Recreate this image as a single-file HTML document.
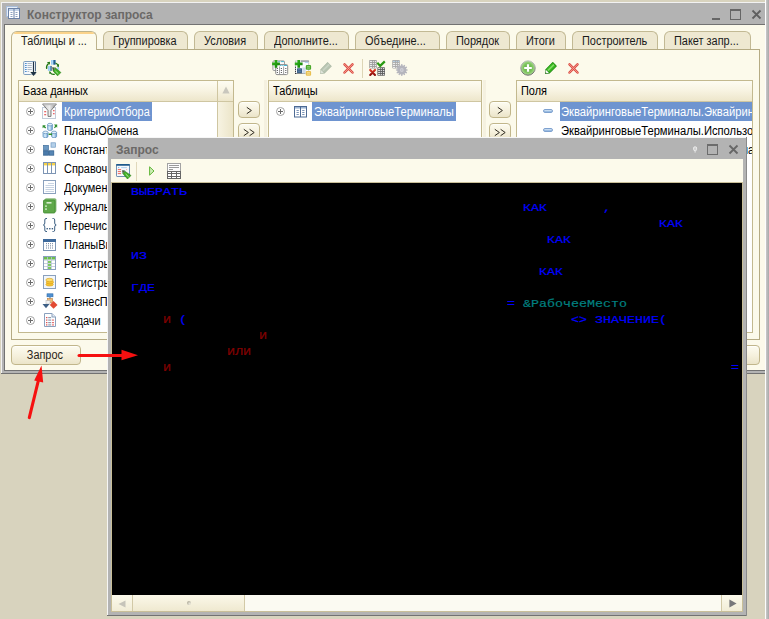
<!DOCTYPE html>
<html lang="ru">
<head>
<meta charset="utf-8">
<title>Конструктор запроса</title>
<style>
html,body{margin:0;padding:0;}
body{width:769px;height:619px;overflow:hidden;position:relative;background:#d8d3be;font-family:"Liberation Sans",sans-serif;font-size:11px;color:#000;}
.a{position:absolute;box-sizing:border-box;}
.t{position:absolute;white-space:nowrap;line-height:14px;font-size:12px;transform:scaleX(.91);transform-origin:0 0;}
.s{display:inline-block;font-size:12px;transform:scaleX(.91);transform-origin:0 50%;white-space:nowrap;}
/* main window */
#mw{left:1px;top:2px;width:767px;height:372px;background:#fff;}
#mwg{left:2px;top:3px;width:766px;height:370px;background:#b1b1b1;}
#mwd{left:4px;top:24px;width:762px;height:346px;background:#6e6e6e;}
#mwc{left:5px;top:25px;width:760px;height:345px;background:#fcfaeb;}
.ttl{font-weight:bold;font-size:12px;color:#6b6967;transform:none;}
/* tabs */
.tab{position:absolute;box-sizing:border-box;top:31px;height:18px;border:1px solid #c2b994;border-bottom:none;border-radius:6px 6px 0 0;background:#eee8d1;text-align:left;padding-left:8.5px;line-height:18px;white-space:nowrap;color:#1a1a1a;}
.tab.act{top:31px;height:19px;background:#fcfaeb;border-color:#bdb38c;line-height:18px;z-index:3;}
.tab.act:before{content:"";position:absolute;left:2px;right:2px;top:0;height:2px;background:#fbd38a;border-radius:4px 4px 0 0;}
#tp{left:11px;top:49px;width:749px;height:291px;border:1px solid #b5ab84;background:#fcfaeb;}
/* lists */
.lst{position:absolute;box-sizing:border-box;border:1px solid #c3b98f;background:#fff;overflow:hidden;}
.hdr{position:absolute;left:0;top:0;right:0;height:21px;box-sizing:border-box;border-bottom:1px solid #cfc6a1;background:linear-gradient(#fdfcf2,#f8f4e3 45%,#ede6cb);}
.row{position:absolute;left:0;right:0;height:19px;}
.sel{position:absolute;top:0;height:19px;background:#6e94d0;}
.pl{position:absolute;width:9px;height:9px;border:1px solid #a3a3a3;border-radius:50%;box-sizing:border-box;background:#fff;}
.pl:before{content:"";position:absolute;left:1px;top:3px;width:5px;height:1px;background:#6a6a6a;}
.pl:after{content:"";position:absolute;left:3px;top:1px;width:1px;height:5px;background:#6a6a6a;}
.btn{position:absolute;box-sizing:border-box;border:1px solid #c1b68b;border-radius:4px;background:linear-gradient(#fdfcf1,#f5f0dc 55%,#ebe4c9);box-shadow:inset 0 1px 0 #fffffa;text-align:center;}
/* query window */
#qw{background:#b3b3b3;}
#qtb{left:111px;top:159px;width:632px;height:23px;background:#fcfaeb;}
#qed{left:112px;top:183px;width:630px;height:412px;background:#000;}
.c{position:absolute;white-space:pre;font-family:"Liberation Mono",monospace;font-size:13.333px;line-height:16px;color:#0000ff;transform-origin:0 11.5px;transform:scaleY(.87);-webkit-text-stroke-width:.22px;}
.r{color:#800000;}
.g{color:#008080;}
.ic{width:16px;height:16px;display:block}
</style>
</head>
<body>
<!-- right strip -->
<div class="a" style="left:765px;top:0;width:1px;height:619px;background:#fdfdfd"></div>
<div class="a" style="left:766px;top:0;width:3px;height:619px;background:linear-gradient(90deg,#c9c9c9,#a9a9a9)"></div>

<!-- main window -->
<div class="a" style="left:1px;top:2px;width:764px;height:372px;background:#f2f2f2"></div>
<div class="a" style="left:1px;top:373px;width:764px;height:1px;background:#727272"></div>
<div class="a" style="left:2px;top:3px;width:763px;height:370px;background:#b3b3b3"></div>
<div class="a" style="left:4px;top:24px;width:761px;height:347px;background:#727272"></div>
<div class="a" style="left:5px;top:25px;width:760px;height:345px;background:#fcfaeb"></div>
<div class="t ttl" style="left:27px;top:8px;">Конструктор запроса</div>
<!-- title icon -->
<svg class="a" style="left:6px;top:5px" width="16" height="16" viewBox="0 0 16 16">
<rect x="0.5" y="1.5" width="11" height="10" fill="#e6eef8" stroke="#a9bdd8"/>
<rect x="2.5" y="3.5" width="11" height="10" fill="#fff" stroke="#6c82a6"/>
<rect x="3" y="4" width="10" height="2" fill="#c4d4e8"/>
<line x1="8" y1="4" x2="8" y2="13" stroke="#6a80a3"/>
<g stroke="#8ea2c0"><line x1="4.5" y1="7.5" x2="6.5" y2="7.5"/><line x1="4.5" y1="9.5" x2="6.5" y2="9.5"/><line x1="4.5" y1="11.5" x2="6.5" y2="11.5"/><line x1="9.5" y1="7.5" x2="11.5" y2="7.5"/><line x1="9.5" y1="9.5" x2="11.5" y2="9.5"/><line x1="9.5" y1="11.5" x2="11.5" y2="11.5"/></g>
</svg>
<!-- title buttons -->
<div class="a" style="left:712px;top:18px;width:8px;height:2px;background:#666"></div>
<div class="a" style="left:730px;top:9px;width:11px;height:11px;border:1px solid #666;border-top-width:2px"></div>
<svg class="a" style="left:751px;top:9px" width="11" height="11" viewBox="0 0 11 11"><path d="M1.5 1.5 L9.5 9.5 M9.5 1.5 L1.5 9.5" stroke="#606060" stroke-width="1.8" fill="none"/></svg>

<!-- tab panel -->
<div class="a" id="tp"></div>
<div class="tab act" style="left:11px;width:86px;"><span class="s">Таблицы и ...</span></div>
<div class="tab" style="left:103px;width:85px;"><span class="s">Группировка</span></div>
<div class="tab" style="left:194px;width:64px;"><span class="s">Условия</span></div>
<div class="tab" style="left:264px;width:85px;"><span class="s">Дополните...</span></div>
<div class="tab" style="left:355px;width:85px;"><span class="s">Объедине...</span></div>
<div class="tab" style="left:446px;width:64px;"><span class="s">Порядок</span></div>
<div class="tab" style="left:516px;width:50px;"><span class="s">Итоги</span></div>
<div class="tab" style="left:572px;width:86px;"><span class="s">Построитель</span></div>
<div class="tab" style="left:664px;width:87px;"><span class="s">Пакет запр...</span></div>

<!-- TOOLBARS placeholder -->

<!-- toolbar 1 -->
<svg class="a" style="left:23px;top:60px" width="15" height="17" viewBox="0 0 15 17"><rect x="0.7" y="1.5" width="11.8" height="13" rx="0.8" fill="#f5f9fd" stroke="#7f9dbb"/><path d="M12.5 1.6 V10.8" stroke="#516c88"/><path d="M7.6 14.5 H12.6 V11.2 H7.6 Z" fill="#fcfaeb"/><path d="M2 3.5 H3.7 M2 5.5 H3.7 M2 7.5 H3.7 M2 9.5 H3.7 M2 11.5 H3.7" stroke="#4f8fcf"/><path d="M4.5 3.5 H8.8 M4.5 5.5 H8.8 M4.5 7.5 H8.8 M4.5 9.5 H8.8 M4.5 11.5 H6.2" stroke="#aeb9c6"/><path d="M10.5 1.8 V12.6" stroke="#1f3346" stroke-width="1.2"/><path d="M7.3 12.1 H13.7 L10.5 16 Z" fill="#1f3346"/></svg>
<svg class="a" style="left:45px;top:59px" width="17" height="18" viewBox="0 0 17 18"><defs><linearGradient id="bs" x1="0" y1="0" x2="1" y2="0"><stop offset="0" stop-color="#8ec6f2"/><stop offset=".4" stop-color="#b4dcf8"/><stop offset=".55" stop-color="#2f6da3"/><stop offset=".8" stop-color="#1f4f7c"/><stop offset="1" stop-color="#8ec6f2"/></linearGradient><linearGradient id="bs2" x1="0" y1="0" x2="1" y2="0"><stop offset="0" stop-color="#8ec6f2"/><stop offset=".55" stop-color="#b4dcf8"/><stop offset=".75" stop-color="#2f6da3"/><stop offset="1" stop-color="#244f78"/></linearGradient></defs><rect x="6" y="1" width="4.9" height="4.7" fill="url(#bs)"/><rect x="2.9" y="6.9" width="3.8" height="5" fill="url(#bs2)"/><rect x="12.4" y="8" width="1.7" height="2.8" fill="#9ccdf3"/><path d="M1.7 9.8 Q0.9 6.4 3.6 4.4" fill="none" stroke="#1f7414" stroke-width="1.3"/><path d="M1.9 3.3 L5 2.7 L4.8 5.8 Z" fill="#1f7414"/><path d="M10.4 4 Q12.2 4.6 13 6.4" fill="none" stroke="#1f7414" stroke-width="1.3"/><path d="M14.1 4.8 L13.9 8 L11.4 7.2 Z" fill="#1f7414"/><path d="M5.2 13.6 Q6.8 16 9.8 15.2" fill="none" stroke="#1f7414" stroke-width="1.3"/><path d="M4.7 11.8 L6.1 14 L4 14.7 Z" fill="#1f7414"/><path d="M10.3 8.8 L15.9 13.5 L12.6 16.8 L8 11.9 Z" fill="#3fae24" stroke="#237a14" stroke-width=".6"/><path d="M10.4 12 L13.3 14.7" stroke="#b9ecaa" stroke-width="1"/><path d="M7.2 8.2 L10.3 8.8 L8 11.9 Z" fill="#1c3a17"/><path d="M8.6 9.4 L9.8 9.6 L8.9 10.8 Z" fill="#e8e8e8"/></svg>

<!-- toolbar 2 -->
<svg class="a" style="left:271px;top:60px" width="18" height="16" viewBox="0 0 18 16"><defs><linearGradient id="pg" x1="0" y1="0" x2="9" y2="8" gradientUnits="userSpaceOnUse"><stop offset="0" stop-color="#3cc020"/><stop offset="1" stop-color="#0d7a04"/></linearGradient></defs><rect x="1.9" y="0.9" width="11.6" height="9.6" rx="1" fill="#fbfbfb" stroke="#9d9d9d"/><path d="M7.3 1.6 H8.8 M10.1 1.6 H12.9" stroke="#45b9cf" stroke-width="1"/><rect x="4.7" y="4.6" width="12" height="10" rx="1.2" fill="#fff" stroke="#8c8c8c"/><path d="M9.2 5.5 H10.4 M11.4 5.5 H12.3 M13.1 5.5 H16" stroke="#3fb4d2" stroke-width="1"/><path d="M8.5 6.5 V14.4 M12.6 6.5 V14.4" stroke="#9a9a9a" stroke-width=".9"/><path d="M5.8 8.5 H7 M5.8 10.5 H7 M5.8 12.5 H7 M9.8 8.5 H11 M9.8 10.5 H11 M9.8 12.5 H11 M14.2 8.5 H15.4 M14.2 10.5 H15.4 M14.2 12.5 H15.4" stroke="#555" stroke-width=".9"/><path d="M1.1 3.85 H8.9 M5 0.050000000000000266 V7.65" stroke="url(#pg)" stroke-width="2.6"/></svg>
<svg class="a" style="left:294px;top:60px" width="18" height="17" viewBox="0 0 18 17"><defs><linearGradient id="pg2" x1="0" y1="0" x2="9" y2="8" gradientUnits="userSpaceOnUse"><stop offset="0" stop-color="#3cc020"/><stop offset="1" stop-color="#0d7a04"/></linearGradient></defs><rect x="1.5" y="1" width="13.2" height="12.6" fill="#fbfcfd" stroke="#b9bec6" stroke-width=".8"/><path d="M7 1.1 H14.8" stroke="#6d737c" stroke-width=".9"/><rect x="10.8" y="1.9" width="3.2" height="1" fill="#a9cdef"/><path d="M1.5 6.8 V14" stroke="#2a2a2a" stroke-width="1" stroke-dasharray="1 1.05"/><path d="M2.5 13.5 H11" stroke="#3a3a3a" stroke-width=".9" stroke-dasharray="1 1"/><rect x="8.3" y="7.5" width="3.4" height="6" fill="#ccdbeb"/><rect x="3" y="8.2" width="5" height="4.7" rx=".5" fill="#3f6389"/><path d="M4 9.6 H7 M4 11.3 H7" stroke="#6387ad" stroke-width=".7"/><rect x="11.8" y="5" width="5.3" height="4.8" rx="1.1" fill="#4aa82a"/><path d="M13 6.7 H16 M13 8.1 H16" stroke="#9fd88a" stroke-width=".8"/><rect x="11.8" y="11" width="5.3" height="4.8" rx="1.1" fill="#e9c050"/><path d="M13 12.7 H16 M13 14.1 H16" stroke="#f7e3a3" stroke-width=".8"/><path d="M0.8000000000000003 3.85 H8.6 M4.7 0.050000000000000266 V7.65" stroke="url(#pg2)" stroke-width="2.6"/></svg>
<svg class="a" style="left:319px;top:61px" width="14" height="14" viewBox="0 0 14 14"><path d="M8.6 1 L12.8 5.3 L5.6 12.4 L1.1 12.9 L1.6 8.3 Z" fill="#a9b7a3"/><path d="M8.6 1.6 L12.2 5.3 L5.6 11.8 L2 8.3 Z" fill="#b7c4b1"/><path d="M3.2 9 L9.6 2.8 L10.8 4 L4.4 10.2 Z" fill="#c9d3c4"/><path d="M2 8.9 L4.9 11.8 L1.5 12.5 Z" fill="#dfe4da"/></svg>
<svg class="a xr" style="left:342px;top:62px" width="13" height="13" viewBox="0 0 13 13"><path d="M2.5 2.3 L10.5 10.5 M10.5 2.3 L2.5 10.5" stroke="#dc4a40" stroke-width="2.5" stroke-linecap="round"/><path d="M2.5 2.3 L10.5 10.5 M10.5 2.3 L2.5 10.5" stroke="#f3a199" stroke-width=".9" stroke-linecap="round"/></svg>
<div class="a" style="left:362px;top:59px;width:1px;height:19px;background:#ddd5b6"></div>
<svg class="a" style="left:368px;top:60px" width="18" height="17" viewBox="0 0 18 17"><defs><linearGradient id="rx" x1="0" y1="0" x2="0" y2="1"><stop offset="0" stop-color="#e23a26"/><stop offset="1" stop-color="#8a0c0c"/></linearGradient></defs><rect x="1.2" y="0" width="7.6" height="8.4" rx=".8" fill="#9c9c9c"/><rect x="1.9" y="0.9" width="2.2" height=".9" fill="#fff"/><rect x="4.9" y="0.9" width="1.0" height=".9" fill="#fff"/><rect x="6.8" y="0.9" width="1.3" height=".9" fill="#fff"/><rect x="1.9" y="2.9" width="2.2" height=".9" fill="#fff"/><rect x="4.9" y="2.9" width="1.0" height=".9" fill="#fff"/><rect x="6.8" y="2.9" width="1.3" height=".9" fill="#fff"/><rect x="1.9" y="4.9" width="2.2" height=".9" fill="#fff"/><rect x="4.9" y="4.9" width="1.0" height=".9" fill="#fff"/><rect x="6.8" y="4.9" width="1.3" height=".9" fill="#fff"/><rect x="1.9" y="6.9" width="2.2" height=".9" fill="#fff"/><rect x="4.9" y="6.9" width="1.0" height=".9" fill="#fff"/><rect x="6.8" y="6.9" width="1.3" height=".9" fill="#fff"/><rect x="9.4" y="7.3" width="7.6" height="8.4" rx=".8" fill="#5c5c5c"/><rect x="10.1" y="8.2" width="2.2" height=".9" fill="#fff"/><rect x="13.1" y="8.2" width="1.0" height=".9" fill="#fff"/><rect x="15.0" y="8.2" width="1.3" height=".9" fill="#fff"/><rect x="10.1" y="10.2" width="2.2" height=".9" fill="#fff"/><rect x="13.1" y="10.2" width="1.0" height=".9" fill="#fff"/><rect x="15.0" y="10.2" width="1.3" height=".9" fill="#fff"/><rect x="10.1" y="12.2" width="2.2" height=".9" fill="#fff"/><rect x="13.1" y="12.2" width="1.0" height=".9" fill="#fff"/><rect x="15.0" y="12.2" width="1.3" height=".9" fill="#fff"/><rect x="10.1" y="14.2" width="2.2" height=".9" fill="#fff"/><rect x="13.1" y="14.2" width="1.0" height=".9" fill="#fff"/><rect x="15.0" y="14.2" width="1.3" height=".9" fill="#fff"/><path d="M9.3 2.8 L12.2 5.9 L16.8 1.4" fill="none" stroke="#2a9a12" stroke-width="2.2"/><path d="M2.2 9.9 L7 14.9 M7 9.9 L2.2 14.9" stroke="url(#rx)" stroke-width="2.1" stroke-linecap="round"/></svg>
<svg class="a" style="left:392px;top:60px" width="17" height="17" viewBox="0 0 17 17"><rect x="0.2" y="0" width="7.6" height="8.4" rx=".8" fill="#a9a9a9"/><rect x="0.9" y="0.9" width="2.2" height=".9" fill="#b9d9f1"/><rect x="3.9" y="0.9" width="1.0" height=".9" fill="#b9d9f1"/><rect x="5.8" y="0.9" width="1.3" height=".9" fill="#b9d9f1"/><rect x="0.9" y="2.9" width="2.2" height=".9" fill="#fff"/><rect x="3.9" y="2.9" width="1.0" height=".9" fill="#fff"/><rect x="5.8" y="2.9" width="1.3" height=".9" fill="#fff"/><rect x="0.9" y="4.9" width="2.2" height=".9" fill="#fff"/><rect x="3.9" y="4.9" width="1.0" height=".9" fill="#fff"/><rect x="5.8" y="4.9" width="1.3" height=".9" fill="#fff"/><rect x="0.9" y="6.9" width="2.2" height=".9" fill="#fff"/><rect x="3.9" y="6.9" width="1.0" height=".9" fill="#fff"/><rect x="5.8" y="6.9" width="1.3" height=".9" fill="#fff"/><path d="M15.68 9.47 L15.68 10.53 L14.23 10.77 L14.02 11.55 L15.15 12.48 L14.62 13.40 L13.26 12.88 L12.68 13.46 L13.20 14.82 L12.28 15.35 L11.35 14.22 L10.57 14.43 L10.33 15.88 L9.27 15.88 L9.03 14.43 L8.25 14.22 L7.32 15.35 L6.40 14.82 L6.92 13.46 L6.34 12.88 L4.98 13.40 L4.45 12.48 L5.58 11.55 L5.37 10.77 L3.92 10.53 L3.92 9.47 L5.37 9.23 L5.58 8.45 L4.45 7.52 L4.98 6.60 L6.34 7.12 L6.92 6.54 L6.40 5.18 L7.32 4.65 L8.25 5.78 L9.03 5.57 L9.27 4.12 L10.33 4.12 L10.57 5.57 L11.35 5.78 L12.28 4.65 L13.20 5.18 L12.68 6.54 L13.26 7.12 L14.62 6.60 L15.15 7.52 L14.02 8.45 L14.23 9.23 Z" fill="#b5b5bd"/><circle cx="9.8" cy="10" r="1.9" fill="#cfcfd6"/><circle cx="9.8" cy="10" r=".8" fill="#b9b9c1"/></svg>

<!-- toolbar 3 -->
<svg class="a" style="left:520px;top:60px" width="16" height="16" viewBox="0 0 16 16"><defs><radialGradient id="gp" cx=".5" cy=".5" r=".55"><stop offset="0" stop-color="#58a838"/><stop offset=".55" stop-color="#7cc35c"/><stop offset="1" stop-color="#b9e0a2"/></radialGradient><linearGradient id="gs" x1="0" y1="0" x2="0" y2="1"><stop offset="0" stop-color="#c2c2c2"/><stop offset="1" stop-color="#666"/></linearGradient></defs><circle cx="8" cy="8" r="7.2" fill="url(#gp)" stroke="url(#gs)" stroke-width="1"/><path d="M8 4.2 V11.8 M4.2 8 H11.8" stroke="#fff" stroke-width="2.2"/></svg>
<svg class="a" style="left:544px;top:61px" width="14" height="14" viewBox="0 0 14 14"><path d="M8.6 1 L12.8 5.3 L5.6 12.4 L1.1 12.9 L1.6 8.3 Z" fill="#1d7a12"/><path d="M8.6 1.6 L12.2 5.3 L5.6 11.8 L2 8.3 Z" fill="#35b31f"/><path d="M3.2 9 L9.6 2.8 L10.8 4 L4.4 10.2 Z" fill="#7fdc62"/><path d="M9.2 1.2 L12.6 4.7 L11.8 5.5 L8.4 2 Z" fill="#2a9a18"/><path d="M2 8.9 L4.9 11.8 L1.5 12.5 Z" fill="#fff"/><path d="M1.5 11.2 L2.8 12.3 L1.3 12.7 Z" fill="#1d5a12"/></svg>
<svg class="a xr" style="left:567px;top:62px" width="13" height="13" viewBox="0 0 13 13"><path d="M2.5 2.3 L10.5 10.5 M10.5 2.3 L2.5 10.5" stroke="#dc4a40" stroke-width="2.5" stroke-linecap="round"/><path d="M2.5 2.3 L10.5 10.5 M10.5 2.3 L2.5 10.5" stroke="#f3a199" stroke-width=".9" stroke-linecap="round"/></svg>

<div class="a" style="left:264px;top:80px;width:3px;height:253px;background:#f5f1e0"></div>
<div class="a" style="left:483px;top:80px;width:3px;height:253px;background:#f5f1e0"></div>
<!-- arrow buttons -->
<div class="btn" style="left:238px;top:101px;width:22px;height:17px"></div>
<div class="btn" style="left:238px;top:123px;width:22px;height:17px"></div>
<div class="btn" style="left:489px;top:101px;width:22px;height:17px"></div>
<div class="btn" style="left:489px;top:123px;width:22px;height:17px"></div>
<svg class="a" style="left:238px;top:101px" width="22" height="40" viewBox="0 0 22 40"><path d="M8.8 6.3 L13.4 9.5 L8.8 12.7" fill="none" stroke="#2e2a20" stroke-width="1"/><path d="M5.8 28.3 L10.4 31.5 L5.8 34.7 M11.6 28.3 L16.2 31.5 L11.6 34.7" fill="none" stroke="#2e2a20" stroke-width="1"/></svg>
<svg class="a" style="left:489px;top:101px" width="22" height="40" viewBox="0 0 22 40"><path d="M8.8 6.3 L13.4 9.5 L8.8 12.7" fill="none" stroke="#2e2a20" stroke-width="1"/><path d="M5.8 28.3 L10.4 31.5 L5.8 34.7 M11.6 28.3 L16.2 31.5 L11.6 34.7" fill="none" stroke="#2e2a20" stroke-width="1"/></svg>

<!-- bottom buttons -->
<div class="btn" style="left:11px;top:345px;width:70px;height:20px;line-height:18px;color:#2a2418;"><span class="s" style="transform-origin:50% 50%;margin-left:-2px">Запрос</span></div>
<div class="btn" style="left:690px;top:345px;width:70px;height:20px"></div>


<!-- list 1 -->
<div class="lst" style="left:18px;top:80px;width:216px;height:253px;">
 <div class="hdr"></div>
 <div class="t" style="left:4px;top:3px;">База данных</div>
<div class="row" style="top:21px"><div class="sel" style="left:43px;width:90px;"></div><div class="pl" style="left:7px;top:5px"></div><div class="a" style="left:23px;top:1px;width:16px;height:16px"><svg class="ic" viewBox="0 0 16 16"><defs><linearGradient id="fg" x1="0" y1="0" x2="1" y2="0"><stop offset="0" stop-color="#c6c6c6"/><stop offset=".5" stop-color="#ededed"/><stop offset="1" stop-color="#8c8c8c"/></linearGradient></defs><rect x="0.5" y="4.5" width="13" height="11" fill="#fdfdfd" stroke="#c2cbd8"/><g fill="#e8686b"><rect x="2.2" y="8" width="2" height="1.3"/><rect x="2.2" y="11" width="2" height="1.3"/><rect x="11" y="7" width="1.6" height="1.3"/><rect x="11" y="10" width="1.6" height="1.3"/></g><path d="M0.6 1 L14.4 1 L9 7.5 L9 13.4 L6 13.4 L6 7.5 Z" fill="url(#fg)" stroke="#6f6f6f" stroke-width=".9"/><path d="M1.5 1.6 H13.5" stroke="#bdbdbd" stroke-width="1.2"/></svg></div><div class="t" style="left:45px;top:3px;color:#fff">КритерииОтбора</div></div>
<div class="row" style="top:40px"><div class="pl" style="left:7px;top:5px"></div><div class="a" style="left:23px;top:1px;width:16px;height:16px"><svg class="ic" viewBox="0 0 16 16"><defs><linearGradient id="cg" x1="0" y1="0" x2="1" y2="0"><stop offset="0" stop-color="#9cc8ec"/><stop offset=".45" stop-color="#d8ebf9"/><stop offset="1" stop-color="#5f9bd0"/></linearGradient></defs><path d="M5.6 2.6 v4.6 a2.4 1.3 0 0 0 4.8 0 v-4.6" fill="url(#cg)" stroke="#5b8cba" stroke-width=".7"/><ellipse cx="8.0" cy="2.6" rx="2.4" ry="1.3" fill="#e3f0fa" stroke="#5b8cba" stroke-width=".7"/><path d="M1 10.4 v4 a2.5 1.3 0 0 0 5 0 v-4" fill="url(#cg)" stroke="#5b8cba" stroke-width=".7"/><ellipse cx="3.5" cy="10.4" rx="2.5" ry="1.3" fill="#e3f0fa" stroke="#5b8cba" stroke-width=".7"/><path d="M9.6 10.4 v4 a2.5 1.3 0 0 0 5 0 v-4" fill="url(#cg)" stroke="#5b8cba" stroke-width=".7"/><ellipse cx="12.1" cy="10.4" rx="2.5" ry="1.3" fill="#e3f0fa" stroke="#5b8cba" stroke-width=".7"/><g fill="#2f8f2f"><path d="M0.6 6.2 L0.6 3.2 L3.8 3.2 L2.8 4.2 L4.2 5.6 L3.2 6.4 L1.8 5.2 Z"/><path d="M12 2.6 L15.2 2.6 L15.2 5.8 L14.2 4.8 L12.8 6.2 L12 5.4 L13.2 4 Z"/><path d="M6.6 11.4 L9.4 11.4 L9.4 10.4 L10.2 12.4 L9.4 14 L9.4 13 L6.6 13 Z"/></g></svg></div><div class="t" style="left:45px;top:3px">ПланыОбмена</div></div>
<div class="row" style="top:59px"><div class="pl" style="left:7px;top:5px"></div><div class="a" style="left:23px;top:1px;width:16px;height:16px"><svg class="ic" viewBox="0 0 16 16"><g stroke-width=".7"><rect x="1.6" y="4.4" width="4.8" height="4.8" fill="#6b98c2" stroke="#426f9c"/><rect x="1.6" y="9.8" width="4.8" height="4.4" fill="#4a7aaa" stroke="#2f5d8c"/><rect x="7" y="9.8" width="4.8" height="4.4" fill="#5685b4" stroke="#2f5d8c"/><rect x="9" y="1.8" width="4.4" height="4.4" fill="#b4d0e9" stroke="#7099c2"/></g></svg></div><div class="t" style="left:45px;top:3px">Константы</div></div>
<div class="row" style="top:78px"><div class="pl" style="left:7px;top:5px"></div><div class="a" style="left:23px;top:1px;width:16px;height:16px"><svg class="ic" viewBox="0 0 16 16"><rect x="1.5" y="2.5" width="12" height="11" fill="#fff" stroke="#7d95b4"/><rect x="2" y="3" width="11" height="2.4" fill="#f6d24a"/><path d="M5.5 3 V13 M9.5 3 V13" stroke="#7d95b4"/></svg></div><div class="t" style="left:45px;top:3px">Справочники</div></div>
<div class="row" style="top:97px"><div class="pl" style="left:7px;top:5px"></div><div class="a" style="left:23px;top:1px;width:16px;height:16px"><svg class="ic" viewBox="0 0 16 16"><rect x="1.5" y="1.5" width="12" height="13" fill="#fdfeff" stroke="#8aa0bd"/><path d="M6 4.5 H12 M3.5 6.5 H12 M3.5 8.5 H12 M3.5 10.5 H12 M3.5 12.5 H12" stroke="#c7d3e2" stroke-width="1"/></svg></div><div class="t" style="left:45px;top:3px">Документы</div></div>
<div class="row" style="top:116px"><div class="pl" style="left:7px;top:5px"></div><div class="a" style="left:23px;top:1px;width:16px;height:16px"><svg class="ic" viewBox="0 0 16 16"><rect x="3" y="0.8" width="11" height="13" rx="1" fill="#8fc47e" stroke="#6aa85a" stroke-width=".7"/><rect x="1.5" y="2" width="11.5" height="13" rx="1" fill="#5fa84a" stroke="#3f8a30" stroke-width=".8"/><rect x="4.5" y="4" width="5" height="1.6" fill="#d7efcf"/><rect x="3" y="7.5" width="2" height="1.2" fill="#d7efcf"/><rect x="3" y="10.5" width="2" height="1.2" fill="#d7efcf"/></svg></div><div class="t" style="left:45px;top:3px">ЖурналыДокументов</div></div>
<div class="row" style="top:135px"><div class="pl" style="left:7px;top:5px"></div><div class="a" style="left:23px;top:1px;width:16px;height:16px"><svg class="ic" viewBox="0 0 16 16"><path d="M5 1.5 H4 Q2.8 1.5 2.8 3 V6 Q2.8 7.8 1.3 8 Q2.8 8.2 2.8 10 V13 Q2.8 14.5 4 14.5 H5 M10.5 1.5 H11.5 Q12.7 1.5 12.7 3 V6 Q12.7 7.8 14.2 8 Q12.7 8.2 12.7 10 V13 Q12.7 14.5 11.5 14.5 H10.5" fill="none" stroke="#3c5f82" stroke-width="1"/><g fill="#3c5f82"><rect x="4.5" y="11" width="1.4" height="1.4"/><rect x="7.1" y="11" width="1.4" height="1.4"/><rect x="9.7" y="11" width="1.4" height="1.4"/></g></svg></div><div class="t" style="left:45px;top:3px">Перечисления</div></div>
<div class="row" style="top:154px"><div class="pl" style="left:7px;top:5px"></div><div class="a" style="left:23px;top:1px;width:16px;height:16px"><svg class="ic" viewBox="0 0 16 16"><rect x="1.5" y="3.5" width="12" height="11" fill="#fff" stroke="#7d95b4"/><rect x="1.5" y="3.5" width="12" height="2" fill="#3e6a9c" stroke="#3e6a9c"/><g stroke="#8796ab" stroke-width="1" stroke-dasharray="1 .8"><path d="M4.5 7 V13 M6.5 7 V13 M8.5 7 V13 M10.5 7 V13"/></g></svg></div><div class="t" style="left:45px;top:3px">ПланыВидовХарактеристик</div></div>
<div class="row" style="top:173px"><div class="pl" style="left:7px;top:5px"></div><div class="a" style="left:23px;top:1px;width:16px;height:16px"><svg class="ic" viewBox="0 0 16 16"><rect x="1.5" y="1.5" width="12" height="13" fill="#fff" stroke="#8aa0bd"/><rect x="2" y="2" width="11" height="2.6" fill="#6cbf4c"/><g fill="#7cc95e"><rect x="6" y="6" width="3" height="2"/><rect x="6" y="9" width="3" height="2"/><rect x="6" y="12" width="3" height="2"/></g><path d="M5.5 2 V14 M9.5 2 V14 M2 5.2 H13 M2 8.5 H13 M2 11.5 H13" stroke="#b9c6d6" stroke-width=".8"/></svg></div><div class="t" style="left:45px;top:3px">РегистрыСведений</div></div>
<div class="row" style="top:192px"><div class="pl" style="left:7px;top:5px"></div><div class="a" style="left:23px;top:1px;width:16px;height:16px"><svg class="ic" viewBox="0 0 16 16"><rect x="1.5" y="1.5" width="12" height="13" fill="#f1f6fb" stroke="#8aa0bd"/><g stroke="#d8a018" stroke-width=".6" fill="#f6c535"><ellipse cx="7.6" cy="10.4" rx="3.7" ry="1.7"/><ellipse cx="7.9" cy="8.2" rx="3.7" ry="1.7"/><ellipse cx="7.5" cy="6" rx="3.7" ry="1.7" fill="#fbdd72"/></g></svg></div><div class="t" style="left:45px;top:3px">РегистрыНакопления</div></div>
<div class="row" style="top:211px"><div class="pl" style="left:7px;top:5px"></div><div class="a" style="left:23px;top:1px;width:16px;height:16px"><svg class="ic" viewBox="0 0 16 16"><rect x="5" y="0.8" width="6" height="3" fill="#4e8fd0" stroke="#2f6cab" stroke-width=".6"/><path d="M8 4 V6" stroke="#2f6cab"/><rect x="5.5" y="5.5" width="5" height="4" fill="#f0b878" stroke="#b9803e" stroke-width=".6"/><rect x="4" y="7.5" width="4" height="3.5" fill="#f2f2f2" stroke="#b0b0b0" stroke-width=".5"/><path d="M0.5 11 H7.5 L4 15.2 Z" fill="#3d5f86"/><path d="M11.5 8 L15.5 12 L11.5 15.8 L7.8 12 Z" fill="#e24a33"/></svg></div><div class="t" style="left:45px;top:3px">БизнесПроцессы</div></div>
<div class="row" style="top:230px"><div class="pl" style="left:7px;top:5px"></div><div class="a" style="left:23px;top:1px;width:16px;height:16px"><svg class="ic" viewBox="0 0 16 16"><path d="M2.5 1.5 H10 L13.5 5 V14.5 H2.5 Z" fill="#fdfeff" stroke="#8aa0bd"/><path d="M10 1.5 V5 H13.5" fill="#e4ebf4" stroke="#8aa0bd"/><g fill="#e05252"><rect x="4" y="5" width="1.4" height="1.2"/><rect x="4" y="7.5" width="1.4" height="1.2"/><rect x="4" y="10" width="1.4" height="1.2"/><rect x="4" y="12.3" width="1.4" height="1.2"/><rect x="10.2" y="7.5" width="1.6" height="1.2"/><rect x="10.2" y="10" width="1.6" height="1.2"/><rect x="10.2" y="12.3" width="1.6" height="1.2"/></g><g fill="#8d9cb0"><rect x="6.2" y="5" width="3" height="1.2"/><rect x="6.2" y="7.5" width="3" height="1.2"/><rect x="6.2" y="10" width="3" height="1.2"/><rect x="6.2" y="12.3" width="3" height="1.2"/></g></svg></div><div class="t" style="left:45px;top:3px">Задачи</div></div>
<div class="a" style="left:198px;top:0;width:16px;height:251px;border-left:1px solid #cfc6a1;background:linear-gradient(90deg,#f7f3e2,#ece5c9)"></div>
<div class="a" style="left:199px;top:0;width:15px;height:21px;border-bottom:1px solid #cfc6a1;background:linear-gradient(#fdfcf2,#f8f4e3 45%,#ede6cb)"></div>
<svg class="a" style="left:202.5px;top:5.3px" width="8" height="8" viewBox="0 0 8 8"><path d="M4 0.5 L7.6 7.5 L0.4 7.5 Z" fill="#c9c7bd"/></svg>
</div>
<!-- list 2 -->
<div class="lst" style="left:268px;top:80px;width:214px;height:253px;">
 <div class="hdr"></div>
 <div class="t" style="left:4px;top:3px;">Таблицы</div>
<div class="row" style="top:21px"><div class="sel" style="left:43px;width:144px;"></div><div class="pl" style="left:7px;top:5px"></div><svg class="a" style="left:25px;top:4px" width="13" height="12" viewBox="0 0 13 12"><rect x="0.5" y="0.5" width="12" height="10.5" fill="#fff" stroke="#4d6a94"/><rect x="1" y="1" width="11" height="1.6" fill="#9fb6d4"/><path d="M6.5 1 V11" stroke="#4d6a94"/><path d="M2.5 4.5 H4.8 M2.5 6.5 H4.8 M2.5 8.5 H4.8 M8.2 4.5 H10.5 M8.2 6.5 H10.5 M8.2 8.5 H10.5" stroke="#7b93b6"/></svg><div class="t" style="left:44.5px;top:3px;color:#fff;transform:scaleX(.933)">ЭквайринговыеТерминалы</div></div>
</div>
<!-- list 3 -->
<div class="lst" style="left:516px;top:80px;width:237px;height:253px;">
 <div class="hdr"></div>
 <div class="t" style="left:4px;top:3px;">Поля</div>
<div class="row" style="top:21px"><div class="sel" style="left:43px;width:193px;"></div><div class="a" style="left:26px;top:7px;width:10px;height:4px;border-radius:2px;background:linear-gradient(#dbe9f7,#86aedb);border:1px solid #7ea1cf"></div><div class="t" style="left:43.5px;top:3px;color:#fff;transform:scaleX(.933)">ЭквайринговыеТерминалы.ЭквайринговыйТерминал</div></div>
<div class="row" style="top:40px"><div class="a" style="left:26px;top:7px;width:10px;height:4px;border-radius:2px;background:linear-gradient(#dbe9f7,#86aedb);border:1px solid #7ea1cf"></div><div class="t" style="left:43.5px;top:3px;transform:scaleX(.933)">ЭквайринговыеТерминалы.ИспользоватьБезПодключенияОборудования</div></div>
<div class="row" style="top:59px"><div class="a" style="left:26px;top:7px;width:10px;height:4px;border-radius:2px;background:linear-gradient(#dbe9f7,#86aedb);border:1px solid #7ea1cf"></div><div class="t" style="left:41.5px;top:3px;transform:scaleX(.933)">ЭквайринговыеТерминалы.ПодключаемоеОборудование</div></div>
</div>

<!-- query window -->

<div class="a" style="left:107px;top:137px;width:640px;height:479px;background:#f6f6f6"></div>
<div class="a" style="left:107px;top:615px;width:640px;height:1px;background:#727272"></div>
<div class="a" style="left:746px;top:137px;width:1px;height:479px;background:#8a8a8a"></div>
<div class="a" id="qw" style="left:108px;top:138px;width:638px;height:477px"></div>
<div class="t ttl" style="left:116px;top:143px;">Запрос</div>
<!-- pin / max / close -->
<svg class="a" style="left:692px;top:146px" width="7" height="8" viewBox="0 0 7 8"><rect x="1.6" y="0.8" width="3" height="3.8" rx="1.2" fill="#cfcfcf" stroke="#f4f4f4" stroke-width=".8"/><path d="M3.1 4.8 V6.6" stroke="#e9e9e9" stroke-width="1"/></svg>
<div class="a" style="left:707px;top:144px;width:11px;height:11px;border:1px solid #6c6c6c;border-top-width:2px"></div>
<svg class="a" style="left:728px;top:144px" width="11" height="11" viewBox="0 0 11 11"><path d="M1.5 1.5 L9.5 9.5 M9.5 1.5 L1.5 9.5" stroke="#666" stroke-width="1.8" fill="none"/></svg>
<div class="a" id="qtb"></div>
<div class="a" style="left:111px;top:182px;width:632px;height:430px;background:#c9bf98"></div>
<div class="a" id="qed"></div>


<!-- query toolbar icons -->
<svg class="a" style="left:116px;top:164px" width="16" height="16" viewBox="0 0 16 16"><rect x="0.5" y="0.5" width="13" height="12" rx="0.6" fill="#f5f9fd" stroke="#7191b1"/><rect x="0.2" y="0" width="13.6" height="1.8" rx="0.5" fill="#1f5a8c"/><rect x="2.2" y="3.1" width="1" height="1" fill="#5b9bd8"/><path d="M5.1 3.6 H10.9" stroke="#a9cbea" stroke-width=".9"/><path d="M1.8 5.6 H5.1 M1.8 7.6 H5.1 M1.8 9.6 H5.1" stroke="#f0695b" stroke-width="1"/><path d="M10.4 5.6 H11.1" stroke="#f0695b" stroke-width=".8"/><path d="M8.8 7.2 L15 11.5 L11.5 15 L6.9 9.6 Z" fill="#3fae24" stroke="#237a14" stroke-width=".6"/><path d="M9.6 10 L12.6 12.9" stroke="#b9ecaa" stroke-width="1"/><path d="M6.2 6.2 L9.4 6.7 L6.7 9.4 Z" fill="#1c3a17"/><path d="M7.5 7.4 L8.7 7.6 L7.7 8.7 Z" fill="#e8e8e8"/></svg>
<div class="a" style="left:136px;top:162px;width:1px;height:19px;background:#e0d8bb"></div>
<svg class="a" style="left:148px;top:165px" width="8" height="12" viewBox="0 0 8 12"><path d="M1.6 1.8 L6 6 L1.6 10.2 Z" fill="#cdeeb6" stroke="#62b53a" stroke-width="1"/></svg>
<svg class="a" style="left:167px;top:163px" width="15" height="16" viewBox="0 0 15 16" shape-rendering="crispEdges"><rect x="0.5" y="0.5" width="13" height="8" fill="#fdfdfd" stroke="#a3a3a3"/><path d="M2 2.5 H12 M2 4.5 H12 M2 6.5 H6" stroke="#9a9a9a"/><rect x="0.5" y="8.5" width="13" height="7" fill="#fff" stroke="#666"/><path d="M4.5 8.5 V15.5 M9.5 8.5 V15.5 M0.5 10.5 H13.5 M0.5 13.5 H13.5" stroke="#666" stroke-width="1"/></svg>
<div class="c " style="left:131px;top:183.5px">ВЫБРАТЬ</div>
<div class="c " style="left:523px;top:199.5px">КАК</div>
<div class="c " style="left:603px;top:199.5px">,</div>
<div class="c " style="left:659px;top:215.5px">КАК</div>
<div class="c " style="left:547px;top:231.5px">КАК</div>
<div class="c " style="left:131px;top:247.5px">ИЗ</div>
<div class="c " style="left:539px;top:263.5px">КАК</div>
<div class="c " style="left:131px;top:279.5px">ГДЕ</div>
<div class="c " style="left:507px;top:295.5px">=</div>
<div class="c g" style="left:523px;top:295.5px">&amp;РабочееМесто</div>
<div class="c r" style="left:163px;top:311.5px">И</div>
<div class="c " style="left:179px;top:311.5px">(</div>
<div class="c " style="left:571px;top:311.5px">&lt;&gt;</div>
<div class="c " style="left:595px;top:311.5px">ЗНАЧЕНИЕ(</div>
<div class="c r" style="left:259px;top:327.5px">И</div>
<div class="c r" style="left:227px;top:343.5px">ИЛИ</div>
<div class="c r" style="left:163px;top:359.5px">И</div>
<div class="c " style="left:731px;top:359.5px">=</div>

<!-- h scrollbar -->
<div class="a" style="left:112px;top:595px;width:630px;height:16px;background:#fbfaf2"></div>
<div class="a" style="left:112px;top:595px;width:21px;height:16px;background:linear-gradient(#fcfaec,#f1ecd6);border-right:1px solid #d2c9a6"></div>
<div class="a" style="left:133px;top:595px;width:112px;height:16px;background:linear-gradient(#fbf8e9,#efe9d0);border-right:1px solid #d2c9a6"></div>
<div class="a" style="left:721px;top:595px;width:21px;height:16px;background:linear-gradient(#fcfaec,#f1ecd6);border-left:1px solid #d2c9a6"></div>
<svg class="a" style="left:118px;top:600px" width="8" height="8" viewBox="0 0 8 8"><path d="M0.5 4 L7.5 0.4 L7.5 7.6 Z" fill="#c6c4ba"/></svg>
<svg class="a" style="left:729px;top:599px" width="8" height="9" viewBox="0 0 8 9"><path d="M7.6 4.5 L0.4 0.4 L0.4 8.6 Z" fill="#77777a"/></svg>
<div class="a" style="left:187px;top:601px;width:4px;height:4px;border-radius:50%;background:radial-gradient(circle at 70% 70%,#efece0,#b5b1a0 70%)"></div>

<!-- red arrows -->
<svg class="a" style="left:0;top:340px" width="150" height="90" viewBox="0 0 150 90"><path d="M79 15.4 H124" stroke="#f61010" stroke-width="3" stroke-linecap="round"/><path d="M121.5 9.8 L138 15.2 L121.5 20.2 Z" fill="#f61010"/><path d="M29.3 77.6 L38.5 40" stroke="#f61010" stroke-width="3.1" stroke-linecap="round"/><path d="M34.2 40.6 L41.5 25.5 L43.2 42.6 Z" fill="#f61010"/></svg>
</body>
</html>
